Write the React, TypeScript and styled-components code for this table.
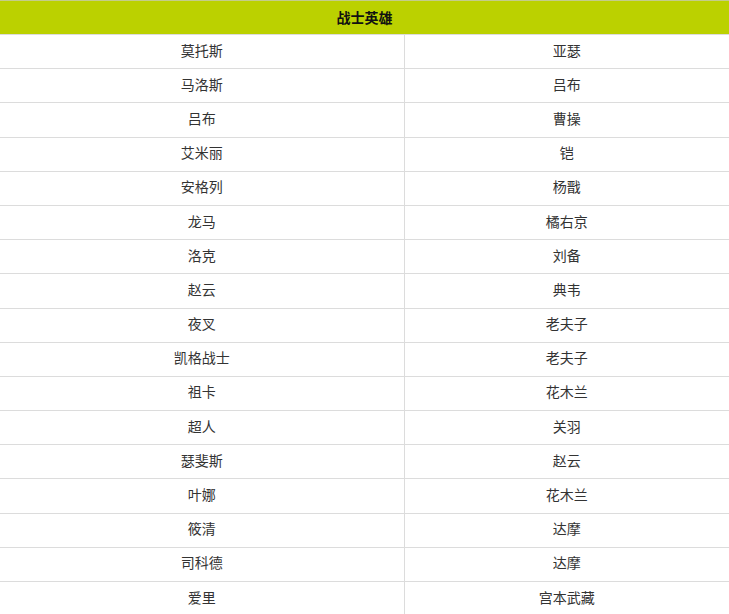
import React from "react";
import styled, { createGlobalStyle } from "styled-components";

const GlobalStyle = createGlobalStyle`
  html, body {
    margin: 0;
    padding: 0;
    background: #fff;
    font-family: "Noto Sans CJK SC", "Liberation Sans", sans-serif;
  }
`;

const rows: [string, string][] = [
  ["莫托斯", "亚瑟"],
  ["马洛斯", "吕布"],
  ["吕布", "曹操"],
  ["艾米丽", "铠"],
  ["安格列", "杨戬"],
  ["龙马", "橘右京"],
  ["洛克", "刘备"],
  ["赵云", "典韦"],
  ["夜叉", "老夫子"],
  ["凯格战士", "老夫子"],
  ["祖卡", "花木兰"],
  ["超人", "关羽"],
  ["瑟斐斯", "赵云"],
  ["叶娜", "花木兰"],
  ["筱清", "达摩"],
  ["司科德", "达摩"],
  ["爱里", "宫本武藏"],
];

const Table = styled.table`
  width: 729px;
  border-collapse: collapse;
  table-layout: fixed;
`;

const HeadCell = styled.th`
  box-sizing: border-box;
  height: 34px;
  padding: 0 0 2px;
  background: #bbd100;
  border-top: 1px solid #c4cc8a;
  border-bottom: 1px solid #dcdcdc;
  color: #111;
  font-size: 14px;
  font-weight: bold;
  text-align: center;
`;

const Cell = styled.td<{ $first?: boolean }>`
  box-sizing: border-box;
  height: 34.2px;
  padding: 0 0 4px;
  border-bottom: 1px solid #dcdcdc;
  border-right: ${({ $first }) => ($first ? "1px solid #dcdcdc" : "none")};
  color: #333;
  font-size: 14px;
  text-align: center;
`;

export default function App() {
  return (
    <>
      <GlobalStyle />
      <Table>
        <colgroup>
          <col style={{ width: 404 }} />
          <col />
        </colgroup>
        <thead>
          <tr>
            <HeadCell colSpan={2}>战士英雄</HeadCell>
          </tr>
        </thead>
        <tbody>
          {rows.map(([a, b], i) => (
            <tr key={i}>
              <Cell $first>{a}</Cell>
              <Cell>{b}</Cell>
            </tr>
          ))}
        </tbody>
      </Table>
    </>
  );
}
